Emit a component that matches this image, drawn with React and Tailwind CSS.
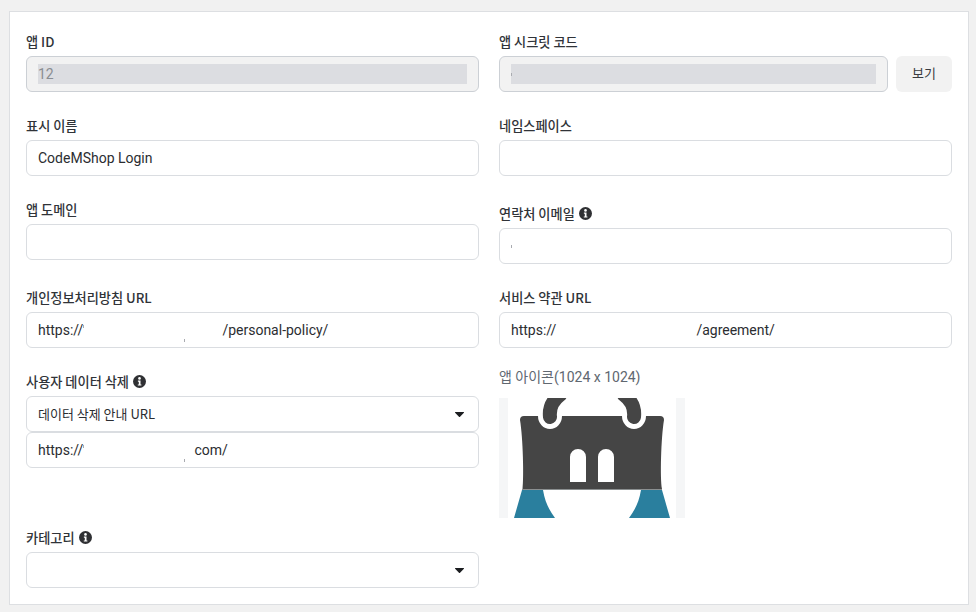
import React from "react";

const fontStack = "font-['Roboto','Noto_Sans_CJK_KR',sans-serif]";
const cjkFirst = "font-['Noto_Sans_CJK_KR','Roboto',sans-serif]";

function InfoIcon() {
  return (
    <svg className="ml-1 w-[13px] h-[13px]" viewBox="0 0 13 13">
      <circle cx="6.5" cy="6.5" r="6.5" fill="#2f3033" />
      <circle cx="6.5" cy="3.4" r="1.3" fill="#fff" />
      <path d="M4.9 5.6h2.6v3.9h.9v1.1H4.8V9.5h1V6.7h-.9z" fill="#fff" />
    </svg>
  );
}

function Caret() {
  return (
    <svg className="w-[9px] h-[5px]" viewBox="0 0 10 6" preserveAspectRatio="none">
      <path d="M.6 0h8.8c.5 0 .8.5.5.9L5.6 5.6c-.3.4-.9.4-1.2 0L.1.9C-.2.5.1 0 .6 0z" fill="#1c1e21" />
    </svg>
  );
}

function Label({ children, info }) {
  return (
    <div className={`flex items-center h-6 pb-[5px] text-[13.2px] font-medium text-[#303338] ${cjkFirst}`}>
      {children}
      {info && <InfoIcon />}
    </div>
  );
}

function Box({ children, className = "" }) {
  return (
    <div className={`flex items-center h-9 px-[11px] border border-[#dadde1] rounded-md bg-white text-sm text-[#2b2d31] ${className}`}>
      {children}
    </div>
  );
}

function DisabledBox({ children }) {
  return (
    <div className="flex-1 flex items-center h-9 px-[11px] border border-[#ccd0d5] rounded-md bg-[#f2f2f2] text-sm text-[#8a8d91]">
      <div className="flex items-center w-full h-5 bg-[#dcdde1]">{children}</div>
    </div>
  );
}

function SelectBox({ children }) {
  return (
    <Box className={`justify-between pr-[14px] text-[13px] ${cjkFirst}`}>
      <span>{children}</span>
      <Caret />
    </Box>
  );
}

function Speck({ className = "" }) {
  return <span className={`inline-block w-px h-[3px] bg-[#a9abb0] ${className}`} />;
}

function AppIcon() {
  return (
    <svg className="block w-[186px] h-[120px]" viewBox="0 0 186 120">
      <rect width="186" height="120" fill="#f5f6f7" />
      <rect x="9" width="168" height="120" fill="#fff" />
      <path d="M23.5 91 C25 80 24 40 21 22 Q21 18 25 18 H161 Q165 18 165 22 C162 40 161 80 163 91 Z" fill="#454545" />
      <path d="M39 18 A12 13 0 0 0 63 18 Z M123 18 A12 13 0 0 0 147 18 Z" fill="#fff" />
      <path d="M51 19 C50 10 53 3 61 -3 M135 19 C136 10 133 3 125 -3" fill="none" stroke="#454545" strokeWidth="14" strokeLinecap="round" />
      <path d="M71 84 V59 a8 8 0 0 1 16 0 V84 Z M99 84 V59 a8 8 0 0 1 16 0 V84 Z" fill="#fff" />
      <rect x="23" y="91" width="140" height="1" fill="#8b8f90" />
      <path d="M23 92 H44 C46 104 50 112 56 120 H15 Z M142 92 H163 L171 120 H130 C136 112 140 104 142 92 Z" fill="#2a7f9e" />
    </svg>
  );
}

export default function App() {
  return (
    <div className={`min-h-[612px] bg-[#f1f1f1] pl-[9px] pt-[11px] ${fontStack}`}>
      <div className="w-[960px] h-[594px] border border-[#dddfe2] bg-white px-4 pt-5">
        <div className="grid grid-cols-2 gap-x-5 gap-y-6 items-start">
          <div>
            <Label>앱 ID</Label>
            <DisabledBox>12</DisabledBox>
          </div>
          <div>
            <Label>앱 시크릿 코드</Label>
            <div className="flex gap-2">
              <DisabledBox>
                <Speck />
              </DisabledBox>
              <button className="w-14 h-9 rounded-md bg-[#f2f2f2] text-[13px] text-[#3a3c40]">보기</button>
            </div>
          </div>

          <div>
            <Label>표시 이름</Label>
            <Box>CodeMShop Login</Box>
          </div>
          <div>
            <Label>네임스페이스</Label>
            <Box />
          </div>

          <div>
            <Label>앱 도메인</Label>
            <Box />
          </div>
          <div className="mt-1">
            <Label info>연락처 이메일</Label>
            <Box>
              <Speck />
            </Box>
          </div>

          <div>
            <Label>개인정보처리방침 URL</Label>
            <Box>
              https://
              <Speck className="mb-2" />
              <Speck className="ml-[100px] mt-5" />
              <span className="ml-[37px]">/personal-policy/</span>
            </Box>
          </div>
          <div>
            <Label>서비스 약관 URL</Label>
            <Box>
              https://
              <span className="ml-[140px]">/agreement/</span>
            </Box>
          </div>

          <div>
            <Label info>사용자 데이터 삭제</Label>
            <SelectBox>데이터 삭제 안내 URL</SelectBox>
            <Box>
              https://
              <Speck className="mb-2" />
              <Speck className="ml-[100px] mt-5" />
              <span className="ml-[9px]">com/</span>
            </Box>
          </div>
          <div className="-mt-[5px] h-[151px]">
            <div className="h-[31px] text-sm text-[#606770]">앱 아이콘(1024 x 1024)</div>
            <AppIcon />
          </div>

          <div className="-mt-[14px]">
            <Label info>카테고리</Label>
            <SelectBox />
          </div>
        </div>
      </div>
    </div>
  );
}
